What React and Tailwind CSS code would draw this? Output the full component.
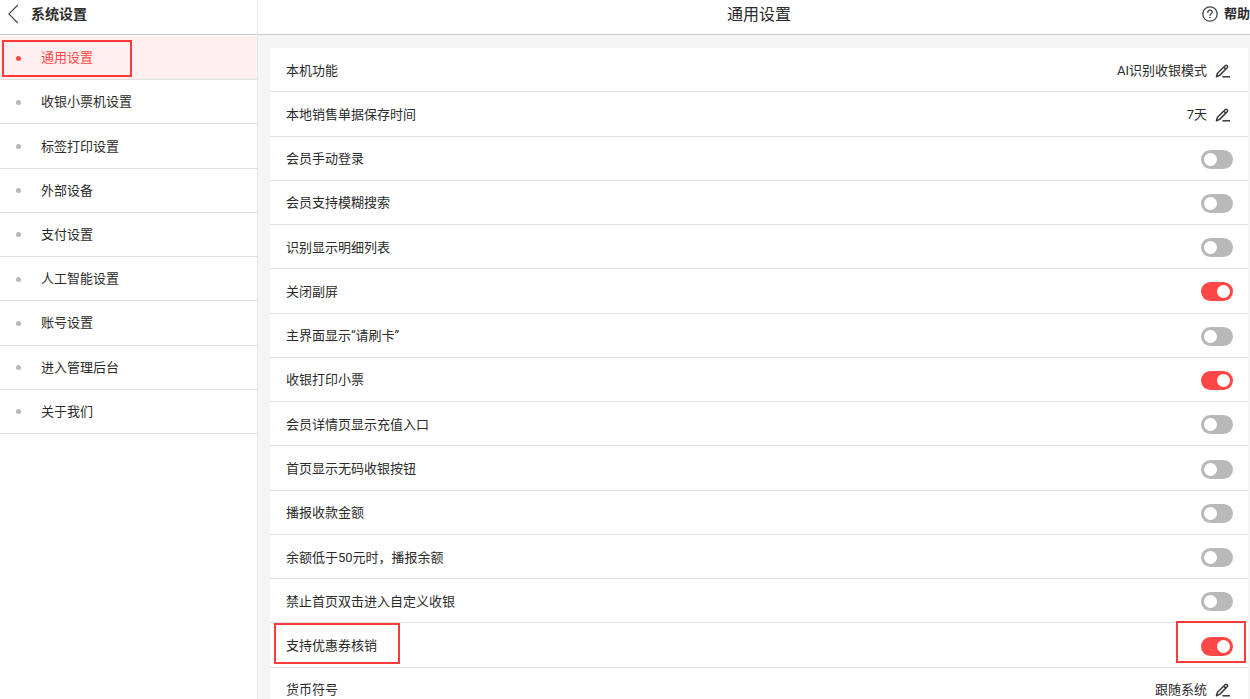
import React, { useState } from 'react';

const menus = [
  '通用设置',
  '收银小票机设置',
  '标签打印设置',
  '外部设备',
  '支付设置',
  '人工智能设置',
  '账号设置',
  '进入管理后台',
  '关于我们',
];

const settings = [
  { id: 'mode', label: '本机功能', value: 'AI识别收银模式' },
  { id: 'keep-days', label: '本地销售单据保存时间', value: '7天' },
  { id: 'member-login', label: '会员手动登录', on: false },
  { id: 'member-search', label: '会员支持模糊搜索', on: false },
  { id: 'detail-list', label: '识别显示明细列表', on: false },
  { id: 'close-screen', label: '关闭副屏', on: true },
  { id: 'show-card', label: '主界面显示“请刷卡”', on: false },
  { id: 'print-receipt', label: '收银打印小票', on: true },
  { id: 'recharge', label: '会员详情页显示充值入口', on: false },
  { id: 'no-code', label: '首页显示无码收银按钮', on: false },
  { id: 'broadcast', label: '播报收款金额', on: false },
  { id: 'low-balance', label: '余额低于50元时，播报余额', on: false },
  { id: 'double-click', label: '禁止首页双击进入自定义收银', on: false },
  { id: 'coupon', label: '支持优惠券核销', on: true, marked: true },
  { id: 'currency', label: '货币符号', value: '跟随系统' },
];

const BackIcon = () => (
  <svg className="w-3 h-5" viewBox="0 0 12 20" fill="none" stroke="#444" strokeWidth="1.1">
    <path d="M9.8 1 .9 10l8.9 9" />
  </svg>
);

const HelpIcon = () => (
  <svg className="size-4" viewBox="0 0 16 16" fill="none" stroke="#444" strokeWidth="1.3" strokeLinecap="round">
    <circle cx="8" cy="8" r="7.2" />
    <path d="M5.8 6.4c0-1.3.9-2.2 2.2-2.2s2.2.8 2.2 2c0 1.5-2.2 1.6-2.2 3.2" />
    <circle cx="8" cy="11.6" r=".4" fill="#444" strokeWidth=".8" />
  </svg>
);

const EditIcon = () => (
  <svg className="size-4" viewBox="0 0 16 16" fill="none" stroke="#3a3a3a" strokeWidth="1.5" strokeLinejoin="round">
    <path d="M1.4 13.8l1.1-3.6 7.6-7.5c.6-.6 1.3-.6 1.8-.1l.4.4c.5.5.5 1.2-.1 1.8l-7.5 7.6-3.3 1.4z" />
    <path d="M8.8 4.2l2.2 2.2" />
    <path d="M7.4 13.8H15" />
  </svg>
);

const Switch = ({ id, defaultChecked }) => (
  <input
    id={id}
    type="checkbox"
    role="switch"
    defaultChecked={defaultChecked}
    className="appearance-none w-8 h-[19px] p-[3px] rounded-full bg-[#b9b9b9] checked:bg-[#ff4747] flex checked:justify-end cursor-pointer before:block before:size-[13px] before:rounded-full before:bg-white"
  />
);

const SettingRow = ({ item }) => (
  <li className="relative flex items-center justify-between pt-0.5 pl-4 pr-[15px] border-b border-[#e2e2e2]">
    {item.value ? (
      <>
        <span>{item.label}</span>
        <div className="flex items-center gap-2">
          <span>{item.value}</span>
          <button type="button" aria-label={item.label} className="pr-0.5 cursor-pointer">
            <EditIcon />
          </button>
        </div>
      </>
    ) : (
      <>
        <label htmlFor={item.id}>{item.label}</label>
        <Switch id={item.id} defaultChecked={item.on} />
      </>
    )}
    {item.marked ? (
      <>
        <span className="absolute left-1 top-0 w-[126px] h-[41px] border-2 border-[#fb3a3a] pointer-events-none" />
        <span className="absolute right-0.5 -top-0.5 w-[70px] h-[42px] border-2 border-[#fb3a3a] pointer-events-none" />
      </>
    ) : null}
  </li>
);

const App = () => {
  const [active, setActive] = useState(menus[0]);

  return (
    <div className="flex h-screen overflow-hidden bg-white text-[13px] leading-5 text-[#2b2b2b] font-[Roboto,'Noto_Sans_CJK_SC',sans-serif]">
      <aside className="w-[258px] shrink-0 border-r border-[#e9e9e9]">
        <header className="flex items-center h-[35px] pb-1.5 pl-2 gap-[11px] border-b border-[#c8c8c8]">
          <button type="button" aria-label="返回" className="cursor-pointer">
            <BackIcon />
          </button>
          <h1 className="text-sm font-bold">系统设置</h1>
        </header>

        <nav className="mt-px">
          <ul className="grid auto-rows-fr min-h-[398px]">
            {menus.map((name) => (
              <li key={name} className="relative grid border-b border-[#e0e0e0]">
                <button
                  type="button"
                  onClick={() => setActive(name)}
                  className={
                    name === active
                      ? 'flex items-center gap-5 pt-px pl-4 text-left cursor-pointer bg-[#fff0f0] text-[#ff4747]'
                      : 'flex items-center gap-5 pt-px pl-4 text-left cursor-pointer'
                  }
                >
                  <span className={name === active ? 'size-[5px] rounded-full bg-[#ff4747]' : 'size-[5px] rounded-full bg-[#b9b9b9]'} />
                  {name}
                </button>
                {name === active ? (
                  <span className="absolute left-0.5 top-1 w-[130px] h-[37px] border-2 border-[#fb3a3a] pointer-events-none" />
                ) : null}
              </li>
            ))}
          </ul>
        </nav>
      </aside>

      <div className="flex flex-col flex-1 min-w-0">
        <header className="grid grid-cols-[1fr_auto_1fr] items-center shrink-0 h-[35px] pb-1.5 pl-2.5 border-b border-[#c8c8c8]">
          <h2 className="col-start-2 pt-px text-base">通用设置</h2>
          <a href="#help" className="justify-self-end flex items-center gap-1.5 font-bold">
            <HelpIcon />
            帮助
          </a>
        </header>

        <main className="flex-1 overflow-y-auto [scrollbar-width:none] bg-[#f5f5f5] pt-[13px] pl-3 pr-0.5">
          <ul className="grid auto-rows-fr min-h-[664px] bg-white">
            {settings.map((item) => (
              <SettingRow key={item.id} item={item} />
            ))}
          </ul>
        </main>
      </div>
    </div>
  );
};

export default App;
